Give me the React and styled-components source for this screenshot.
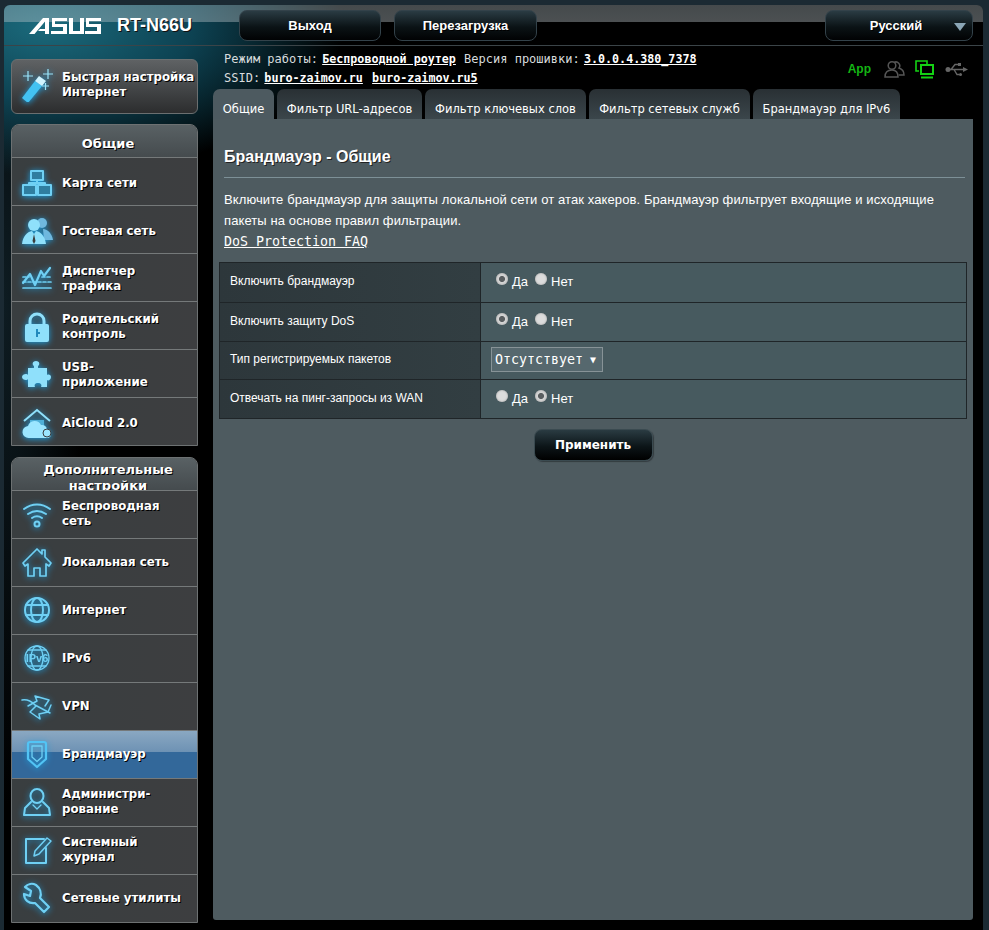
import React from 'react';
import styled, { createGlobalStyle } from 'styled-components';

const MONO = '"DejaVu Sans Mono", "Liberation Mono", monospace';
const SANS = '"Liberation Sans", Arial, sans-serif';
const VERDANA = '"DejaVu Sans", Verdana, sans-serif';

const Global = createGlobalStyle`
  html, body {
    margin: 0;
    height: 930px;
    overflow: hidden;
    background: #1b2a33;
  }
`;

const Frame = styled.div`
  margin: 5px 6px 0 4px;
  height: 925px;
  border-radius: 6px 6px 0 0;
  overflow: hidden;
  background:
    radial-gradient(ellipse 300px 150px at 40px 20px, #1b6a7c 0%, #0d4252 50%, rgba(0, 0, 0, 0) 100%),
    radial-gradient(ellipse 80px 500px at 0 300px, #0e1c22 0%, rgba(0, 0, 0, 0) 100%),
    #000;
`;

const TopBar = styled.header`
  display: flex;
  align-items: center;
  height: 41px;
  box-sizing: border-box;
  padding: 5px 10px 5px 25px;
  border-bottom: 1px solid #3b4448;
  background: linear-gradient(
    to bottom,
    rgba(190, 205, 210, 0.36) 0,
    rgba(190, 200, 205, 0.4) 17px,
    transparent 17px
  );
`;

const LogoSvg = styled.svg`
  width: 72px;
  height: 17px;
  flex: none;
  fill: #fff;
`;

const Model = styled.span`
  margin-left: 16px;
  width: 122px;
  font: bold 18px/1 ${SANS};
  color: #fff;
  text-shadow: 1px 1px 0 #111;
`;

const TopButton = styled.div`
  box-sizing: border-box;
  display: flex;
  align-items: center;
  justify-content: center;
  width: ${(p) => p.$w}px;
  height: 31px;
  margin-right: ${(p) => p.$mr || 0}px;
  margin-left: ${(p) => (p.$push ? 'auto' : 0)};
  padding-right: ${(p) => p.$pr || 0}px;
  position: relative;
  border: 1px solid #33424a;
  border-radius: 8px;
  background: linear-gradient(#2a3b43 0%, #0b1316 55%, #010203 100%);
  font: bold 13px ${SANS};
  color: #fff;
  text-shadow: 1px 1px 0 #000;
`;

const Caret = styled.i`
  position: absolute;
  right: 6px;
  top: 12px;
  border-left: 6px solid transparent;
  border-right: 6px solid transparent;
  border-top: 8px solid #8ba6b6;
`;

const Body = styled.div`
  display: flex;
  align-items: flex-start;
`;

const Sidebar = styled.nav`
  width: 187px;
  margin: 13px 15px 0 7px;
  flex: none;
  display: flex;
  flex-direction: column;
  gap: 10px;
`;

const QuickButton = styled.div`
  box-sizing: border-box;
  height: 55px;
  display: flex;
  align-items: center;
  padding-bottom: 4px;
  border: 1px solid #6b6f70;
  border-radius: 6px;
  background: linear-gradient(#5f6264 0%, #4a4d4f 40%, #2c2d2e 100%);
`;

const Panel = styled.section`
  box-sizing: border-box;
  margin-top: ${(p) => (p.$second ? 1 : 0)}px;
  border: 1px solid #6d7172;
  border-radius: 8px 8px 0 0;
  background: #3a3d3f;
  overflow: hidden;
`;

const PanelTitle = styled.div`
  box-sizing: border-box;
  height: 32px;
  overflow: hidden;
  padding: ${(p) => (p.$tight ? 4 : 11)}px 0 0 7px;
  background: linear-gradient(#596164, #454b4e);
  font: bold 13px/16px ${VERDANA};
  color: #fff;
  text-align: center;
  text-shadow: 1px 1px 0 #000;
`;

const Row = styled.div`
  box-sizing: border-box;
  height: 48px;
  display: flex;
  align-items: center;
  padding: ${(p) => (p.$upper ? '3px 0 0' : '0 0 1px')};
  border-top: 1px solid #75797a;
  background: ${(p) =>
    p.$active
      ? 'linear-gradient(#8aa8c2 0%, #6e92b4 44%, #33689a 45%, #33689a 100%)'
      : 'linear-gradient(90deg, #393e40, #3d3e40)'};
`;

const IconSlot = styled.span`
  width: 50px;
  flex: none;
  display: flex;
  justify-content: center;
  padding-right: 1px;
  box-sizing: border-box;
  svg {
    display: block;
    width: 34px;
    height: 34px;
    filter: drop-shadow(0 1px 3px #1c9fe0);
  }
`;

const RowLabel = styled.span`
  white-space: pre-line;
  font: bold 11.8px/15px ${VERDANA};
  color: #fff;
  text-shadow: 1px 1px 0 #000;
`;

const Content = styled.main`
  width: 760px;
  flex: none;
`;

const Status = styled.div`
  height: 43px;
  box-sizing: border-box;
  padding: 4px 5px 0 11px;
  display: flex;
  justify-content: space-between;
  font: 12px/19px ${MONO};
  color: #d8dcde;
`;

const StatusLine = styled.div`
  white-space: pre;
`;

const StatusLink = styled.a`
  margin: 0 ${(p) => p.$after ?? 1}px 0 -3px;
  font-weight: bold;
  font-size: 11.7px;
  color: #fff;
  text-decoration: underline;
`;

const StatusIcons = styled.div`
  display: flex;
  align-items: center;
  gap: 10px;
  height: 24px;
  margin-top: 7px;
  svg {
    display: block;
  }
`;

const AppTag = styled.span`
  margin-right: 3px;
  font: bold 12px ${SANS};
  color: #14b514;
`;

const Tabs = styled.div`
  display: flex;
  gap: 3px;
`;

const Tab = styled.div`
  box-sizing: border-box;
  height: 30px;
  padding-top: 11px;
  width: ${(p) => p.$w}px;
  text-align: center;
  border-radius: 7px 7px 0 0;
  background: ${(p) => (p.$active ? '#4d5a60' : 'linear-gradient(#293034, #3b464b)')};
  font: 11.5px/18px ${VERDANA};
  color: #fff;
`;

const Main = styled.div`
  box-sizing: border-box;
  height: 801px;
  padding: 28px 6px 0;
  border-radius: 0 0 3px 3px;
  background: #4e5b60;
`;

const Heading = styled.h2`
  margin: 0 2px 0 5px;
  padding-bottom: 10px;
  border-bottom: 1px solid #7d9097;
  font: bold 16px/20px ${SANS};
  color: #fff;
  text-shadow: 1px 1px 0 #222;
`;

const Intro = styled.p`
  margin: 11px 0 0 5px;
  font: 13px/21px ${SANS};
  letter-spacing: 0.1px;
  color: #fff;
`;

const FaqLink = styled.a`
  display: block;
  font: 13.3px/21px ${MONO};
  letter-spacing: 0;
  color: #fff;
  text-decoration: underline;
`;

const SettingsTable = styled.div`
  margin-top: 10px;
  border: 1px solid #1f2528;
`;

const SettingRow = styled.div`
  box-sizing: border-box;
  display: flex;
  height: 38.75px;
  border-top: ${(p) => (p.$first ? '0' : '1px solid #1f2528')};
`;

const SettingName = styled.div`
  box-sizing: border-box;
  width: 261px;
  flex: none;
  padding: 0 0 2px 10px;
  display: flex;
  align-items: center;
  border-right: 1px solid #1f2528;
  background: linear-gradient(90deg, #2d373b, #323e42);
  font: 12px ${SANS};
  color: #fff;
`;

const SettingValue = styled.div`
  flex: 1;
  display: flex;
  align-items: center;
  padding: 0 0 1px ${(p) => p.$pad ?? 15}px;
  background: #475a5f;
  font: 13px ${SANS};
  color: #fff;
`;

const RadioInput = styled.input`
  appearance: none;
  box-sizing: border-box;
  width: 12px;
  height: 12px;
  margin: 0 4px 5px 0;
  flex: none;
  border-radius: 50%;
  background: #dcdcdc;
  box-shadow: inset 0 0 2px #999;
  &:checked {
    background: radial-gradient(circle, #5a5e60 0 2.7px, #d4d4d4 3.3px);
  }
`;

const RadioText = styled.label`
  margin-right: 7px;
`;

const FakeSelect = styled.div`
  box-sizing: border-box;
  width: 112px;
  height: 25px;
  display: flex;
  align-items: center;
  justify-content: space-between;
  padding: 0 6px 0 3px;
  border: 1px solid #879397;
  background: #56686e;
  font: 13.3px ${MONO};
  color: #fff;
  span:last-child {
    font-size: 10px;
  }
`;

const ApplyRow = styled.div`
  display: flex;
  justify-content: center;
  margin: 10px 0 0 0;
`;

const ApplyButton = styled.button`
  box-sizing: border-box;
  width: 119px;
  height: 32px;
  border: 1px solid #3a4a50;
  border-radius: 8px;
  background: linear-gradient(#2a3b42 0%, #0c1518 55%, #000 100%);
  box-shadow: 1px 1px 1px #343c40;
  font: bold 12px ${VERDANA};
  color: #fff;
`;

/* ---- drawings ---- */
const C = '#6fd0f4';
const Line = (p) => <g fill="none" stroke={C} strokeWidth="1.7" strokeLinecap="round" strokeLinejoin="round" {...p} />;
const Solid = (p) => <g fill="#8fe0fb" {...p} />;

const icons = {
  wand: (
    <>
      <path d="M2 30l13-17 7 5L8 35z" fill="#43c2f2" />
      <path d="M15 13l4-5 7 5-4 5z" fill="#d2f4ff" />
      <path d="M3 8h10M8 3v10M23 6h10M28 1v10M22 18h7M25.500 15v7" stroke="#9be4fa" strokeWidth="1.200" fill="none" />
    </>
  ),
  map: (
    <Line strokeWidth="2">
      <rect x="11" y="5" width="12" height="9" fill="#2f7ea0" />
      <rect x="3" y="19" width="13" height="10" fill="#2f7ea0" />
      <rect x="18" y="19" width="13" height="10" fill="#2f7ea0" />
      <path d="M17 14v3M9 19v-2h16v2" />
    </Line>
  ),
  guest: (
    <Solid>
      <circle cx="22" cy="9" r="5" fill="#6fb8de" />
      <path d="M23 15c5 0 9 5 10 11h-9z" fill="#6fb8de" />
      <circle cx="14" cy="11" r="6" />
      <path d="M2 30c1-8 5-12 10-13l2 3 2-3c5 1 9 5 10 13z" />
      <path d="M14 20l-1.500 7 1.500 3 1.500-3z" fill="#3a3d3f" />
    </Solid>
  ),
  traffic: (
    <Line>
      <path d="M3 15h6M22 15h9M3 20h28" strokeDasharray="3 2" />
      <path d="M3 26h28" />
      <path d="M3 21l7-9 5 11 6-14 3 5 6-8" strokeWidth="2.200" />
    </Line>
  ),
  lock: (
    <>
      <path d="M10 15V11a7 7 0 0114 0v4" fill="none" stroke="#8fe0fb" strokeWidth="3" />
      <path fillRule="evenodd" fill="#8fe0fb" d="M7 14h20a2 2 0 012 2v14a2 2 0 01-2 2H7a2 2 0 01-2-2V16a2 2 0 012-2zM16 19v8h2v-3h2v-2h-2v-3z" />
    </>
  ),
  puzzle: (
    <Solid>
      <path d="M14 8c-2-1-2-5 2-5s4 4 2 5v2h9v7c2-1 4 0 4 2 0 3-3 4-4 3v7h-6c1-2 0-4-3-4s-4 2-3 4H8v-8c-1 2-6 1-6-2s5-4 6-2v-7h6z" />
    </Solid>
  ),
  cloud: (
    <>
      <path d="M4 15L17 4l13 11" fill="none" stroke="#8fe0fb" strokeWidth="2" />
      <path d="M10 14h14v6H10z" fill="#4fb0d8" />
      <path d="M9 32a6 6 0 01-1-12 7 7 0 0113-1 5 5 0 016 5 4 4 0 010 8z" fill="#9be6ff" />
      <circle cx="27" cy="27" r="4" fill="#9be6ff" stroke="#3a3d3f" />
    </>
  ),
  wifi: (
    <Line strokeWidth="2">
      <path d="M4 12c8-6 18-6 26 0M8 17c6-4 12-4 18 0M12 21c3-2 7-2 10 0" />
      <circle cx="17" cy="27" r="2.500" />
    </Line>
  ),
  home: (
    <Line>
      <path d="M3 18L17 4l5 5V5h3v7l6 6-2 3-3-2v12h-6v-8h-6v8H8V19l-3 2z" />
    </Line>
  ),
  globe: (
    <Line strokeWidth="2">
      <circle cx="17" cy="17" r="12" />
      <ellipse cx="17" cy="17" rx="6" ry="12" />
      <path d="M6 12h22M6 22h22" />
    </Line>
  ),
  ipv6: (
    <>
      <Line strokeWidth="1.300">
        <circle cx="17" cy="17" r="12" />
        <ellipse cx="17" cy="17" rx="6" ry="12" />
        <path d="M8 9h18M8 25h18" />
      </Line>
      <text x="17" y="21" textAnchor="middle" fontFamily={SANS} fontWeight="bold" fontSize="11" fill={C}>IPv6</text>
    </>
  ),
  vpn: (
    <Line strokeWidth="1.500">
      <path d="M2 11c5-1 9 1 13 5l15 8" />
      <path d="M8 17l9-5-2-5 14 4-4 6" />
      <path d="M31 16l-3 7-9 2 1 5-10-7 6-6" />
    </Line>
  ),
  shield: (
    <Line strokeWidth="2">
      <path d="M10 5h14a2 2 0 012 2v15l-9 8-9-8V7a2 2 0 012-2z" stroke="#52c4f5" strokeWidth="2.200" />
      <path d="M12 9h10v11l-5 4.500-5-4.500z" strokeWidth="1.300" />
    </Line>
  ),
  admin: (
    <Line strokeWidth="2">
      <ellipse cx="17" cy="11" rx="6.500" ry="7" />
      <path d="M11 17l-6 6-1 7h26l-1-7-6-6" />
      <path d="M13 20l4 4 4-4" strokeWidth="1.300" />
    </Line>
  ),
  log: (
    <Line strokeWidth="2">
      <path d="M26 15v15H6V6h18" />
      <path d="M14 23l1-5 12-13 4 3-12 13z" strokeWidth="1.500" />
    </Line>
  ),
  tools: (
    <Line strokeWidth="2.200">
      <path d="M16 4a9 9 0 00-11 2l6 4-1 5-6-2c0 6 5 10 11 9l9 9 5-5-9-9c2-5 0-10-4-13z" />
    </Line>
  ),
};

const NavIcon = ({ name }) => (
  <IconSlot>
    <svg viewBox="0 0 34 34">{icons[name]}</svg>
  </IconSlot>
);

const AsusLogo = () => (
  <LogoSvg viewBox="0 0 72 17">
    <path d="M0 17L14 1h6v16h-4V4.500L5.500 17zM11 12h5v2h-7z" />
    <path d="M23 1h15v3H26v3h12v10H22v-3h12v-4H23z" />
    <path d="M40 1h4v13h7V1h4v16H40z" />
    <path d="M57 1h15v3H60v3h12v10H56v-3h12v-4H57z" />
  </LogoSvg>
);

const UsersIcon = () => (
  <svg width="21" height="19" viewBox="0 0 21 19" fill="none" stroke="#555" strokeWidth="1.500">
    <circle cx="8" cy="5.500" r="3.800" />
    <path d="M1 17c0-5 3-7 7-7s6 2 6 7z" />
    <path d="M10 2.500a3.800 3.800 0 015 5.500c3 1 5 3 5 7h-5" />
  </svg>
);

const MonitorIcon = () => (
  <svg width="20" height="19" viewBox="0 0 20 19" fill="none" stroke="#14d214" strokeWidth="1.600">
    <path d="M4 11H1V1h11v3" />
    <rect x="6" y="5" width="12" height="9" strokeWidth="2" />
    <path d="M6 17.500h12" strokeWidth="2" />
  </svg>
);

const UsbIcon = () => (
  <svg width="23" height="15" viewBox="0 0 23 15" fill="none" stroke="#666" strokeWidth="1.400">
    <path d="M3 7.500h16M6 7.500l4-5h3M9 7.500l3 5h2" />
    <circle cx="3" cy="7.500" r="2.500" fill="#666" stroke="none" />
    <rect x="13" y="1" width="3" height="3" fill="#666" stroke="none" />
    <circle cx="15.500" cy="12.500" r="1.500" fill="#666" stroke="none" />
    <path d="M18 5l5 2.500L18 10z" fill="#666" stroke="none" />
  </svg>
);

const generalItems = [
  ['map', 'Карта сети'],
  ['guest', 'Гостевая сеть'],
  ['traffic', 'Диспетчер\nтрафика'],
  ['lock', 'Родительский\nконтроль'],
  ['puzzle', 'USB-\nприложение'],
  ['cloud', 'AiCloud 2.0'],
];

const advancedItems = [
  ['wifi', 'Беспроводная\nсеть'],
  ['home', 'Локальная сеть'],
  ['globe', 'Интернет'],
  ['ipv6', 'IPv6'],
  ['vpn', 'VPN'],
  ['shield', 'Брандмауэр', true],
  ['admin', 'Администри-\nрование'],
  ['log', 'Системный\nжурнал'],
  ['tools', 'Сетевые утилиты'],
];

const tabs = [
  ['Общие', 61, true],
  ['Фильтр URL-адресов', 145],
  ['Фильтр ключевых слов', 161],
  ['Фильтр сетевых служб', 161],
  ['Брандмауэр для IPv6', 147],
];

const YesNo = ({ name, value }) => (
  <SettingValue>
    <RadioInput type="radio" name={name} defaultChecked={value === 'yes'} />
    <RadioText>Да</RadioText>
    <RadioInput type="radio" name={name} defaultChecked={value === 'no'} />
    <RadioText>Нет</RadioText>
  </SettingValue>
);

export default function App() {
  return (
    <>
      <Global />
      <Frame>
        <TopBar>
          <AsusLogo />
          <Model>RT-N66U</Model>
          <TopButton $w={142} $mr={13}>Выход</TopButton>
          <TopButton $w={143}>Перезагрузка</TopButton>
          <TopButton $w={148} $pr={6} $push>
            Русский
            <Caret />
          </TopButton>
        </TopBar>
        <Body>
          <Sidebar>
            <QuickButton>
              <NavIcon name="wand" />
              <RowLabel>{'Быстрая настройка\nИнтернет'}</RowLabel>
            </QuickButton>
            <Panel>
              <PanelTitle>Общие</PanelTitle>
              {generalItems.map(([icon, label]) => (
                <Row key={label} $upper>
                  <NavIcon name={icon} />
                  <RowLabel>{label}</RowLabel>
                </Row>
              ))}
            </Panel>
            <Panel $second>
              <PanelTitle $tight>Дополнительные настройки</PanelTitle>
              {advancedItems.map(([icon, label, active]) => (
                <Row key={label} $active={active}>
                  <NavIcon name={icon} />
                  <RowLabel>{label}</RowLabel>
                </Row>
              ))}
            </Panel>
          </Sidebar>
          <Content>
            <Status>
              <div>
                <StatusLine>
                  Режим работы: <StatusLink>Беспроводной роутер</StatusLink> Версия прошивки:{' '}
                  <StatusLink>3.0.0.4.380_7378</StatusLink>
                </StatusLine>
                <StatusLine>
                  SSID: <StatusLink $after={5}>buro-zaimov.ru</StatusLink> <StatusLink>buro-zaimov.ru5</StatusLink>
                </StatusLine>
              </div>
              <StatusIcons>
                <AppTag>App</AppTag>
                <UsersIcon />
                <MonitorIcon />
                <UsbIcon />
              </StatusIcons>
            </Status>
            <Tabs>
              {tabs.map(([label, w, active]) => (
                <Tab key={label} $w={w} $active={active}>{label}</Tab>
              ))}
            </Tabs>
            <Main>
              <Heading>Брандмауэр - Общие</Heading>
              <Intro>
                Включите брандмауэр для защиты локальной сети от атак хакеров. Брандмауэр фильтрует входящие и исходящие
                <br />
                пакеты на основе правил фильтрации.
                <FaqLink>DoS Protection FAQ</FaqLink>
              </Intro>
              <SettingsTable>
                <SettingRow $first>
                  <SettingName>Включить брандмауэр</SettingName>
                  <YesNo name="fw" value="yes" />
                </SettingRow>
                <SettingRow>
                  <SettingName>Включить защиту DoS</SettingName>
                  <YesNo name="dos" value="yes" />
                </SettingRow>
                <SettingRow>
                  <SettingName>Тип регистрируемых пакетов</SettingName>
                  <SettingValue $pad={10}>
                    <FakeSelect>
                      <span>Отсутствует</span>
                      <span>▼</span>
                    </FakeSelect>
                  </SettingValue>
                </SettingRow>
                <SettingRow>
                  <SettingName>Отвечать на пинг-запросы из WAN</SettingName>
                  <YesNo name="ping" value="no" />
                </SettingRow>
              </SettingsTable>
              <ApplyRow>
                <ApplyButton>Применить</ApplyButton>
              </ApplyRow>
            </Main>
          </Content>
        </Body>
      </Frame>
    </>
  );
}
